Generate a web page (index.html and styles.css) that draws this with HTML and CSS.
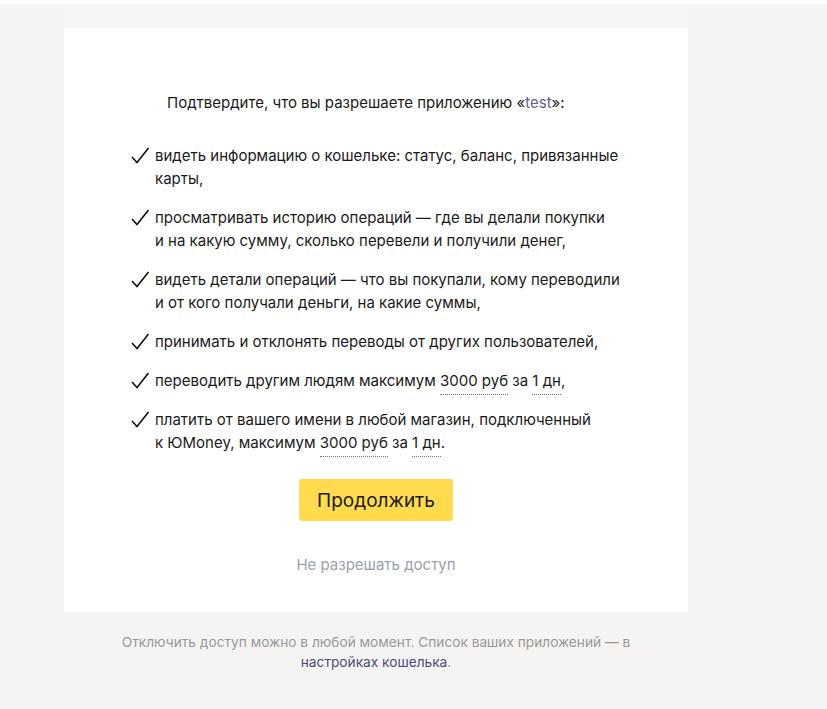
FILE: index.html
```html
<!DOCTYPE html>
<html lang="ru">
  <head>
    <title>Подтверждение доступа</title>
    <link rel="stylesheet" href="styles.css">
  </head>
  <body>
    <div class="top-strip"></div>
    <div class="page">
      <div class="card">
        <p class="lead">Подтвердите, что вы разрешаете приложению «<span class="app">test</span>»:</p>
        <ul class="perms">
          <li>видеть информацию о кошельке: статус, баланс, привязанные<br>карты,</li>
          <li>просматривать историю операций — где вы делали покупки<br>и на какую сумму, сколько перевели и получили денег,</li>
          <li>видеть детали операций — что вы покупали, кому переводили<br>и от кого получали деньги, на какие суммы,</li>
          <li>принимать и отклонять переводы от других пользователей,</li>
          <li>переводить другим людям максимум <span class="limit">3000 руб</span> за <span class="limit">1 дн</span>,</li>
          <li>платить от вашего имени в любой магазин, подключенный<br>к ЮMoney, максимум <span class="limit">3000 руб</span> за <span class="limit">1 дн</span>.</li>
        </ul>
        <div class="actions">
          <button type="submit" class="btn-continue">Продолжить</button>
          <a href="#" class="deny">Не разрешать доступ</a>
        </div>
      </div>
      <p class="note">Отключить доступ можно в любой момент. Список ваших приложений — в<br><a href="#">настройках кошелька</a>.</p>
    </div>
  </body>
</html>
```

FILE: styles.css
```css
body {
  margin: 0;
  background-color: #f5f4f2;
  font-family: Inter, "Noto Sans", sans-serif;
  color: #1a1a1a;
}

.top-strip {
  height: 4px;
  background-color: #fdfdfd;
}

.page {
  width: 624px;
  margin-left: 64px;
  padding-top: 24px;
  background: linear-gradient(#f6f6f6 0, #f6f6f6 24px, transparent 24px);
}

.card {
  background-color: #fff;
  padding: 63px 0 38px 67px;
}

.lead {
  margin: 0 0 30px 36px;
  font-size: 15px;
  line-height: 23px;
}

.app {
  color: #5f5f8f;
}

.perms {
  list-style: none;
  margin: 0;
  padding: 0;
}

.perms li {
  position: relative;
  padding-left: 24px;
  margin-bottom: 16px;
  font-size: 15px;
  line-height: 23px;
}

.perms li::before {
  content: "";
  position: absolute;
  left: 0;
  top: 3px;
  width: 19px;
  height: 17px;
  background: url("data:image/svg+xml,%3Csvg xmlns='http://www.w3.org/2000/svg' width='19' height='17' viewBox='0 0 19 17'%3E%3Cpath d='M1 10 L6 15.5 L17.5 1' fill='none' stroke='%23111' stroke-width='1.6'/%3E%3C/svg%3E") no-repeat;
}

.limit {
  border-bottom: 1px dotted #777;
  padding-bottom: 4px;
}

.actions {
  display: flex;
  flex-direction: column;
  align-items: center;
  margin-left: -67px;
  padding-top: 9px;
}

.btn-continue {
  width: 154px;
  height: 42px;
  border: none;
  border-radius: 3px;
  background-color: #ffdb4d;
  color: #1a1a1a;
  font-family: inherit;
  font-size: 19px;
}

.deny {
  margin-top: 34px;
  font-size: 15px;
  color: #9aa0ab;
  text-decoration: none;
}

.note {
  margin: 20px 0 0;
  text-align: center;
  font-size: 13.7px;
  line-height: 20px;
  color: #999;
}

.note a {
  color: #4b4b7c;
  text-decoration: none;
}
```
